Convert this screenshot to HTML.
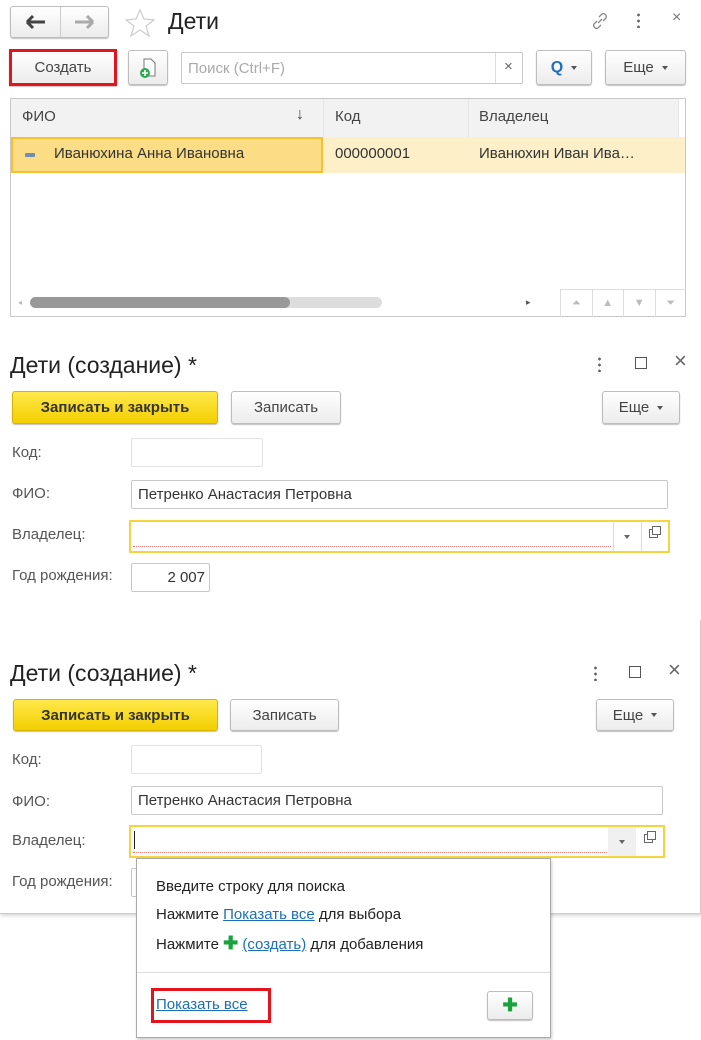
<!DOCTYPE html>
<html><head><meta charset="utf-8"><style>
*{box-sizing:border-box;margin:0;padding:0}
body{width:701px;height:1040px;background:#fff;font-family:"Liberation Sans",Arial,sans-serif;font-size:15px;color:#333;position:relative;overflow:hidden}
.a{position:absolute}
.btn{position:absolute;border:1px solid #bdbdbd;border-radius:3px;background:linear-gradient(#fff,#ececec);box-shadow:0 1px 1px rgba(0,0,0,.25);display:flex;align-items:center;justify-content:center;color:#444}
.inp{position:absolute;border:1px solid #c8c8c8;border-radius:2px;background:#fff;display:flex;align-items:center;padding-left:6px;color:#333}
.lbl{position:absolute;color:#555;font-size:15px}
.title{position:absolute;font-size:23px;color:#222}
.yel{background:linear-gradient(#ffe84a,#f3cf00);border-color:#d6b400;color:#333;font-weight:bold}
.caret{display:inline-block;width:0;height:0;border-left:3px solid transparent;border-right:3px solid transparent;border-top:4px solid #555;margin-left:8px}
a{color:#1b6fb8;text-decoration:underline}
</style></head><body>

<!-- Section 1 -->
<div class="btn" style="left:10px;top:6px;width:99px;height:32px;"></div>
<div class="a" style="left:60px;top:7px;width:1px;height:30px;background:#ccc"></div>
<svg class="a" style="left:25px;top:14px" width="22" height="16" viewBox="0 0 22 16"><path d="M2 8h18M2 8l6-6M2 8l6 6" fill="none" stroke="#444" stroke-width="3"/></svg>
<svg class="a" style="left:73px;top:14px" width="22" height="16" viewBox="0 0 22 16"><path d="M2 8h18M20 8l-6-6M20 8l-6 6" fill="none" stroke="#aaa" stroke-width="3"/></svg>
<svg class="a" style="left:124px;top:8px" width="32" height="30" viewBox="0 0 32 30"><polygon points="16,2 20,11 30,12 22,18 25,28 16,22 7,28 10,18 2,12 12,11" fill="none" stroke="#ccc" stroke-width="1.2"/></svg>
<div class="title" style="left:168px;top:8px;">Дети</div>
<svg class="a" style="left:590px;top:11px" width="20" height="20" viewBox="0 0 20 20"><path d="M9 6l3-3a3 3 0 0 1 4 4l-3 3M11 14l-3 3a3 3 0 0 1-4-4l3-3M8 12l4-4" fill="none" stroke="#888" stroke-width="1.3"/></svg>
<div class="a" style="left:637px;top:12px;width:3px;height:16px;background:radial-gradient(circle,#666 1.3px,transparent 1.5px) 0 0/3px 6px"></div>
<div class="a" style="left:672px;top:9px;font-size:16px;color:#777">×</div>

<div class="btn" style="left:9px;top:49px;width:108px;height:37px;border:3px solid #e3141b;border-radius:0;color:#444">Создать</div>
<div class="btn" style="left:128px;top:50px;width:40px;height:35px;"><svg width="20" height="22" viewBox="0 0 20 22"><path d="M6 2h7l4 4v13H6z" fill="#fff" stroke="#777"/><circle cx="7" cy="16" r="5" fill="#2fa84f"/><path d="M7 13v6M4 16h6" stroke="#fff" stroke-width="1.6"/></svg></div>
<div class="inp" style="left:181px;top:52px;width:342px;height:32px;color:#aaa">Поиск (Ctrl+F)</div>
<div class="a" style="left:495px;top:53px;width:1px;height:30px;background:#ddd"></div>
<div class="a" style="left:504px;top:58px;color:#666;font-size:15px">×</div>
<div class="btn" style="left:536px;top:50px;width:56px;height:35px;"><span style="color:#1f6fc0;font-weight:bold;font-size:16px">Q</span><span class="caret"></span></div>
<div class="btn" style="left:605px;top:50px;width:81px;height:35px;">Еще<span class="caret"></span></div>

<div class="a" style="left:10px;top:98px;width:676px;height:219px;border:1px solid #c8c8c8"></div>
<div class="a" style="left:11px;top:99px;width:667px;height:38px;background:#f2f2f2"></div>
<div class="a" style="left:323px;top:99px;width:1px;height:73px;background:#e4e4e4"></div>
<div class="a" style="left:468px;top:99px;width:1px;height:73px;background:#e4e4e4"></div>
<div class="a" style="left:678px;top:99px;width:1px;height:73px;background:#e4e4e4"></div>
<div class="a" style="left:22px;top:108px;color:#444">ФИО</div>
<div class="a" style="left:296px;top:106px;color:#444;font-size:16px">↓</div>
<div class="a" style="left:335px;top:108px;color:#444">Код</div>
<div class="a" style="left:479px;top:108px;color:#444">Владелец</div>
<div class="a" style="left:11px;top:137px;width:674px;height:36px;background:#fdf0c8"></div>
<div class="a" style="left:11px;top:137px;width:312px;height:36px;background:#fbdd86;border:2px solid #f6c12c"></div>
<div class="a" style="left:25px;top:153px;width:10px;height:4px;background:#6d8fb3;border-radius:1px"></div>
<div class="a" style="left:54px;top:145px;color:#333">Иванюхина Анна Ивановна</div>
<div class="a" style="left:335px;top:145px;color:#333">000000001</div>
<div class="a" style="left:479px;top:145px;color:#333">Иванюхин Иван Ива…</div>
<div class="a" style="left:18px;top:298px;font-size:8px;color:#bbb">◂</div>
<div class="a" style="left:30px;top:297px;width:352px;height:11px;border-radius:6px;background:#ddd"></div>
<div class="a" style="left:30px;top:297px;width:260px;height:11px;border-radius:6px;background:#999"></div>
<div class="a" style="left:526px;top:297px;font-size:9px;color:#555">▸</div>
<div class="a" style="left:560px;top:289px;width:126px;height:28px;border-left:1px solid #ddd;border-top:1px solid #ddd;display:flex">
<div style="flex:1;border-right:1px solid #ddd;text-align:center;color:#bbb;font-size:11px;line-height:26px">⏶</div><div style="flex:1;border-right:1px solid #ddd;text-align:center;color:#bbb;font-size:11px;line-height:26px">▲</div><div style="flex:1;border-right:1px solid #ddd;text-align:center;color:#bbb;font-size:11px;line-height:26px">▼</div><div style="flex:1;text-align:center;color:#bbb;font-size:11px;line-height:26px">⏷</div></div>

<!-- Section 2 -->
<div class="a" style="left:0;top:340px;width:701px;height:280px">
<div class="title" style="left:10px;top:12px;">Дети (создание) *</div>
<div class="a" style="left:598px;top:16px;width:3px;height:16px;background:radial-gradient(circle,#666 1.3px,transparent 1.5px) 0 0/3px 6px"></div>
<div class="a" style="left:635px;top:17px;width:12px;height:12px;border:1.5px solid #555"></div>
<div class="a" style="left:674px;top:8px;font-size:22px;color:#666">×</div>
<div class="btn yel" style="left:12px;top:51px;width:206px;height:33px;">Записать и закрыть</div>
<div class="btn" style="left:231px;top:51px;width:110px;height:33px;">Записать</div>
<div class="btn" style="left:602px;top:51px;width:78px;height:33px;">Еще<span class="caret"></span></div>
<div class="lbl" style="left:12px;top:104px">Код:</div>
<div class="inp" style="left:131px;top:98px;width:132px;height:29px;border-color:#e2e2e2"></div>
<div class="lbl" style="left:12px;top:145px">ФИО:</div>
<div class="inp" style="left:131px;top:140px;width:537px;height:29px;">Петренко Анастасия Петровна</div>
<div class="lbl" style="left:12px;top:186px">Владелец:</div>
<div class="a" style="left:129px;top:180px;width:541px;height:33px;border:2px solid #f5d440;background:#fff"></div>
<div class="a" style="left:133px;top:206px;width:478px;height:1px;border-top:1px dotted #f08080"></div>
<div class="a" style="left:613px;top:182px;width:1px;height:29px;background:#ddd"></div>
<div class="a" style="left:641px;top:182px;width:1px;height:29px;background:#ddd"></div>
<div class="a" style="left:624px;top:195px;border-left:3px solid transparent;border-right:3px solid transparent;border-top:4px solid #666"></div>
<div class="a" style="left:649px;top:189px;width:9px;height:9px;border:1px solid #666"></div>
<div class="a" style="left:652px;top:186px;width:9px;height:9px;border:1px solid #666;background:#fff"></div>
<div class="lbl" style="left:12px;top:227px">Год рождения:</div>
<div class="inp" style="left:131px;top:223px;width:79px;height:29px;justify-content:flex-end;padding-right:4px">2 007</div>
</div>

<!-- Section 3 -->
<div class="a" style="left:0;top:620px;width:701px;height:294px;border-right:1px solid #ccc;border-bottom:1px solid #ccc;box-shadow:1px 2px 3px rgba(0,0,0,.15)"></div>
<div class="a" style="left:0;top:660px;width:701px;height:280px">
<div class="title" style="left:10px;top:0px;">Дети (создание) *</div>
<div class="a" style="left:594px;top:5px;width:3px;height:16px;background:radial-gradient(circle,#666 1.3px,transparent 1.5px) 0 0/3px 6px"></div>
<div class="a" style="left:629px;top:6px;width:12px;height:12px;border:1.5px solid #555"></div>
<div class="a" style="left:668px;top:-3px;font-size:22px;color:#666">×</div>
<div class="btn yel" style="left:13px;top:39px;width:205px;height:32px;">Записать и закрыть</div>
<div class="btn" style="left:230px;top:39px;width:109px;height:32px;">Записать</div>
<div class="btn" style="left:596px;top:39px;width:78px;height:32px;">Еще<span class="caret"></span></div>
<div class="lbl" style="left:12px;top:91px">Код:</div>
<div class="inp" style="left:131px;top:85px;width:131px;height:29px;border-color:#e2e2e2"></div>
<div class="lbl" style="left:12px;top:133px">ФИО:</div>
<div class="inp" style="left:131px;top:126px;width:532px;height:29px;">Петренко Анастасия Петровна</div>
<div class="lbl" style="left:12px;top:172px">Владелец:</div>
<div class="a" style="left:129px;top:165px;width:536px;height:33px;border:2px solid #f5d440;background:#fff"></div>
<div class="a" style="left:134px;top:171px;width:1px;height:18px;background:#222"></div>
<div class="a" style="left:133px;top:192px;width:474px;height:1px;border-top:1px dotted #f08080"></div>
<div class="a" style="left:608px;top:167px;width:28px;height:29px;background:#f0f0f0"></div>
<div class="a" style="left:619px;top:180px;border-left:3px solid transparent;border-right:3px solid transparent;border-top:4px solid #666"></div>
<div class="a" style="left:644px;top:174px;width:9px;height:9px;border:1px solid #666"></div>
<div class="a" style="left:647px;top:171px;width:9px;height:9px;border:1px solid #666;background:#fff"></div>
<div class="lbl" style="left:12px;top:213px">Год рождения:</div>
<div class="inp" style="left:131px;top:208px;width:20px;height:29px"></div>
</div>

<div class="a" style="left:136px;top:858px;width:415px;height:180px;border:1px solid #aaa;background:#fff;box-shadow:1px 2px 3px rgba(0,0,0,.2)"></div>
<div class="a" style="left:156px;top:873px;color:#222;font-size:15px;line-height:28px">Введите строку для поиска<br>Нажмите <a>Показать все</a> для выбора<br>Нажмите <b style="color:#1aa33d;font-size:18px">✚</b> <a>(создать)</a> для добавления</div>
<div class="a" style="left:137px;top:972px;width:413px;height:1px;background:#ddd"></div>
<div class="a" style="left:151px;top:988px;width:120px;height:35px;border:3px solid #e3141b"></div>
<div class="a" style="left:156px;top:996px;font-size:15px"><a>Показать все</a></div>
<div class="btn" style="left:487px;top:991px;width:46px;height:29px;color:#1aa33d;font-size:18px;font-weight:bold">✚</div>
</body></html>
